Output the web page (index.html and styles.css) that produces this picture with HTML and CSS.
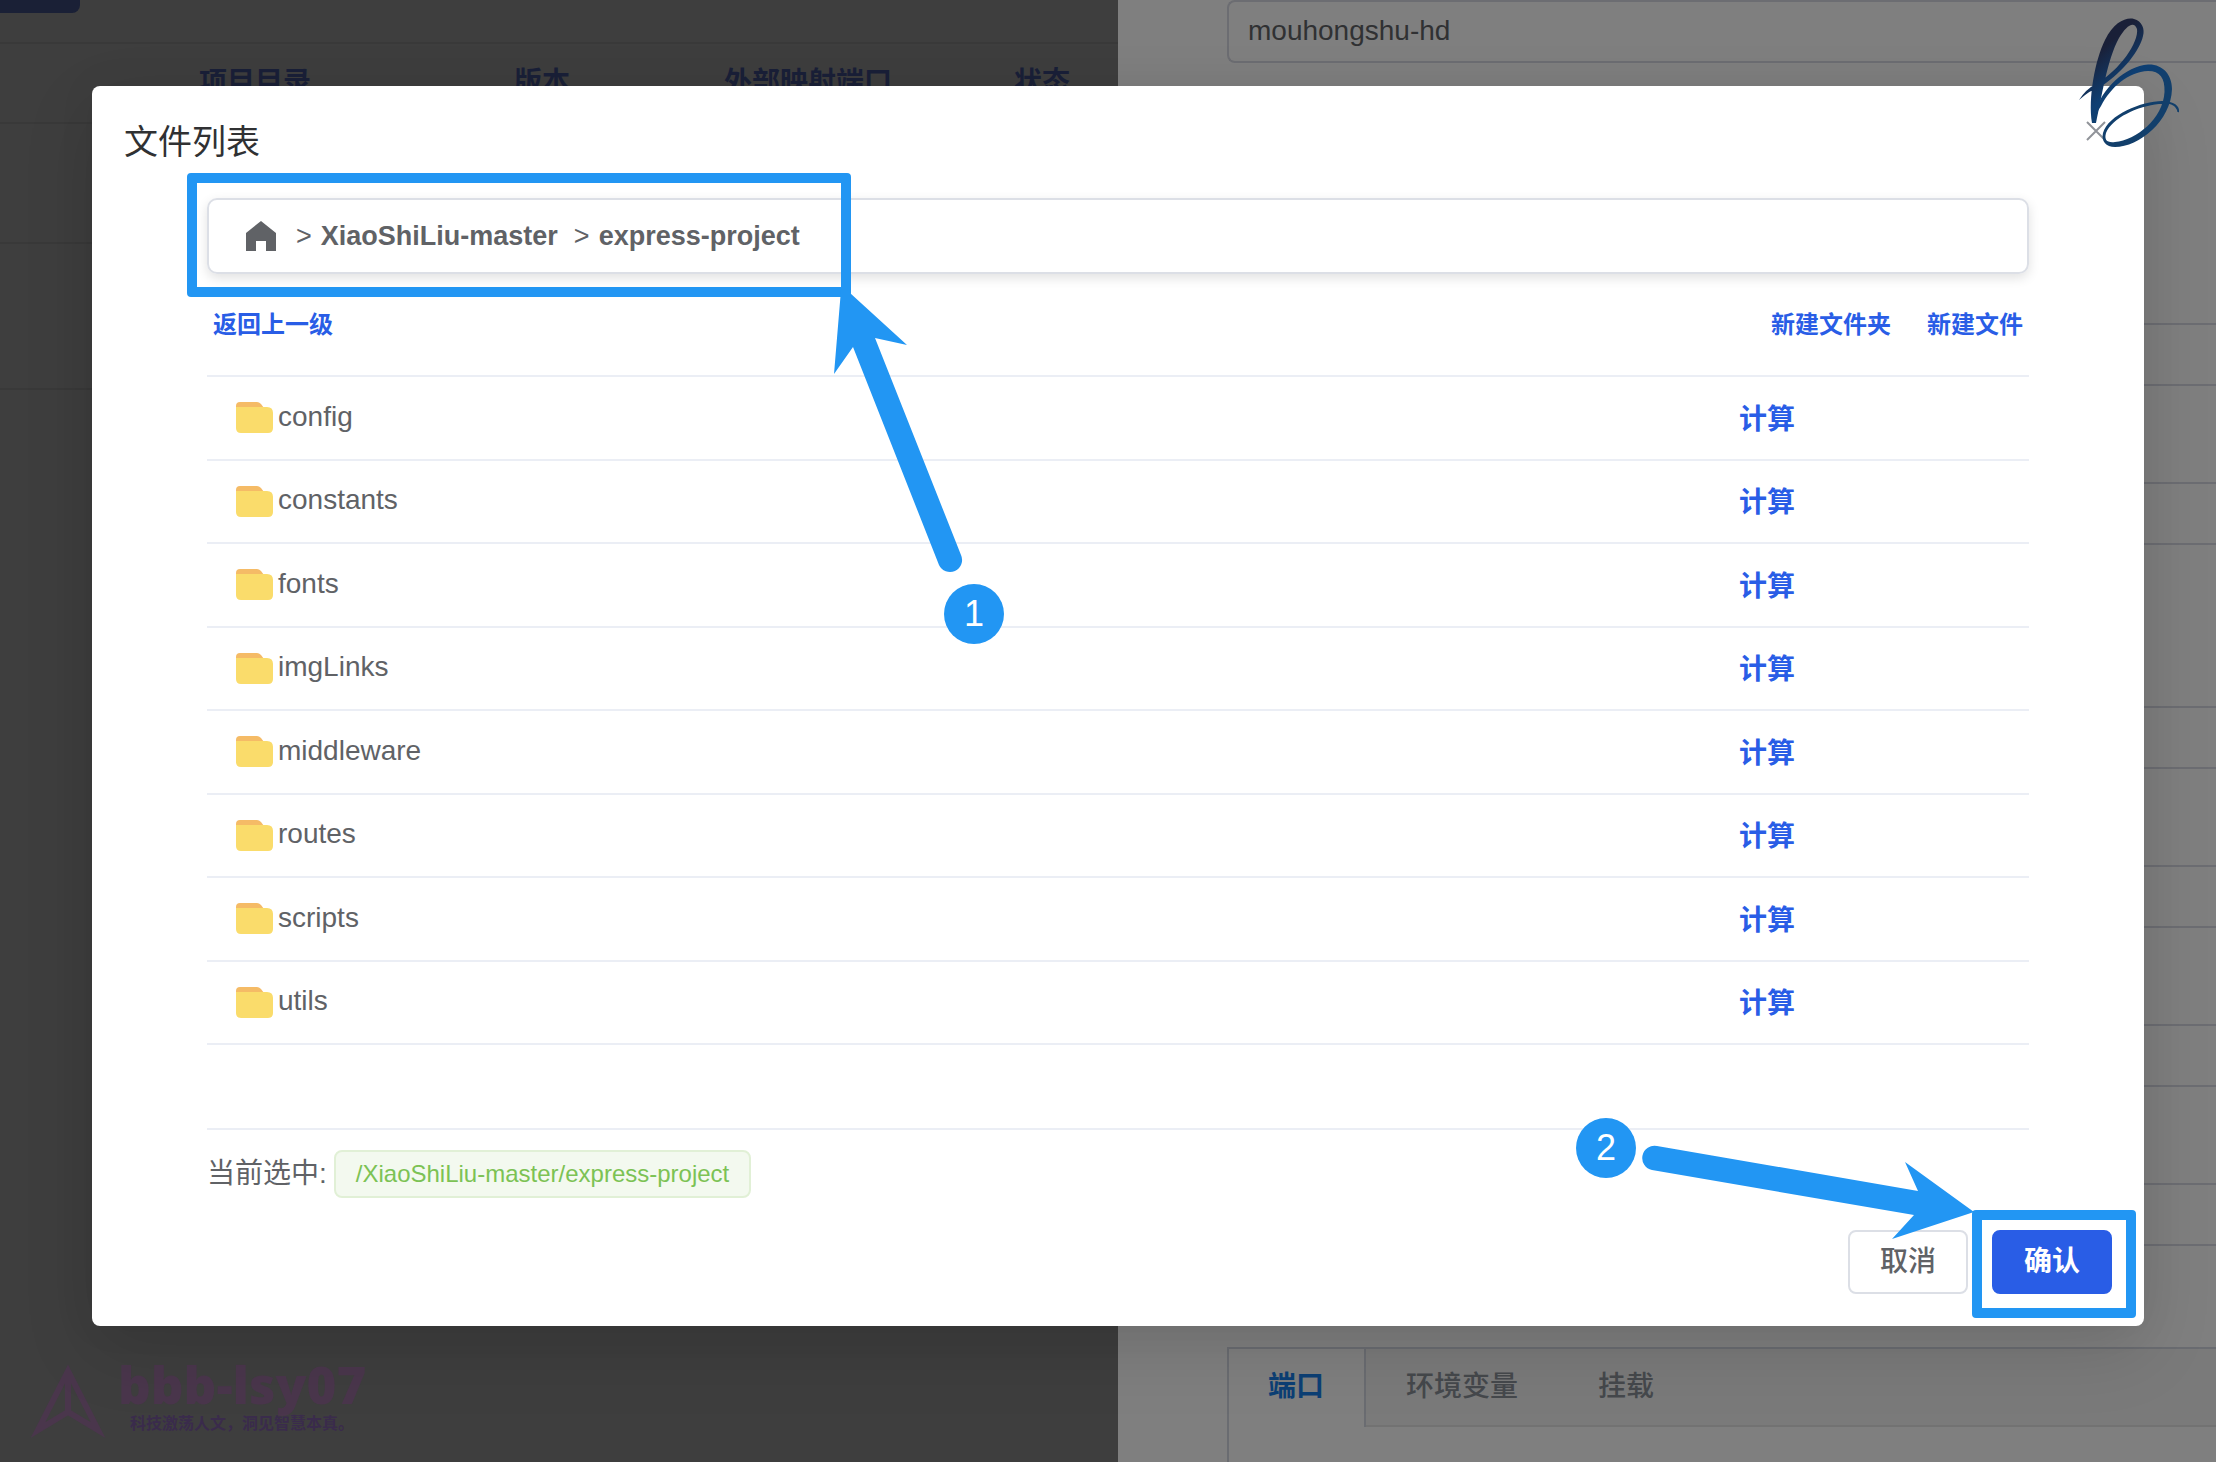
FILE: index.html
```html
<!DOCTYPE html>
<html lang="zh-CN">
<head>
<meta charset="utf-8">
<title>文件列表</title>
<link rel="stylesheet" href="styles.css">
</head>
<body>
<div class="page">
  <main class="projects">
    <div class="toolbar"><button class="toolbar-button" type="button" aria-label="新建"></button></div>
    <table class="project-table">
      <colgroup><col class="col-lead"><col class="col-dir"><col class="col-version"><col class="col-port"><col></colgroup>
      <thead><tr><th></th><th>项目目录</th><th>版本</th><th>外部映射端口</th><th>状态</th></tr></thead>
      <tbody><tr class="row-short"><td colspan="5"></td></tr><tr class="row-tall"><td colspan="5"></td></tr></tbody>
    </table>
    <div class="watermark">
      <svg class="watermark-icon" width="76" height="76" viewBox="0 0 76 76" aria-hidden="true">
        <path d="M38 9 L8 68 L38 50 L68 68 Z M38 9 V50" fill="none" stroke="currentColor" stroke-width="6"/>
      </svg>
      <div class="watermark-text">
        <div class="watermark-name">bbb-lsy07</div>
        <div class="watermark-motto">科技激荡人文，洞见智慧本真。</div>
      </div>
    </div>
  </main>
  <aside class="drawer">
    <form class="drawer-form">
      <div class="group"><input class="field" type="text" value="mouhongshu-hd" aria-label="容器名称"></div>
      <div class="group">
        <input class="field" type="text" aria-label="项目目录">
        <input class="field" type="text" aria-label="版本">
      </div>
      <div class="group">
        <input class="field" type="text" aria-label="启动命令">
        <input class="field" type="text" aria-label="镜像">
        <input class="field" type="text" aria-label="容器端口">
        <input class="field" type="text" aria-label="备注">
      </div>
      <div class="tabs">
        <div class="tab-bar">
          <button class="tab tab-active" type="button">端口</button>
          <button class="tab" type="button">环境变量</button>
          <button class="tab" type="button">挂载</button>
        </div>
      </div>
    </form>
  </aside>
</div>

<div class="overlay">
  <section class="dialog" role="dialog" aria-labelledby="dialog-title">
    <header class="dialog-header">
      <h1 class="dialog-title" id="dialog-title">文件列表</h1>
      <button class="close" type="button" aria-label="关闭">
        <svg width="20" height="20" viewBox="0 0 20 20"><path d="M1 1 19 19 M19 1 1 19" stroke="#909399" stroke-width="2"/></svg>
      </button>
    </header>
    <div class="dialog-body">
      <nav class="crumbs">
        <a class="crumb" href="#" aria-label="主页"><svg class="home" width="30" height="30" viewBox="0 0 30 30"><path d="M15 0 30 12 V30 H20 V20 H10 V30 H0 V12 Z" fill="currentColor"/></svg></a>
        <span class="crumb-sep">&gt;</span><a class="crumb crumb-parent" href="#">XiaoShiLiu-master</a>
        <span class="crumb-sep">&gt;</span><a class="crumb" href="#">express-project</a>
        <span class="mark mark-crumbs"></span>
      </nav>
      <div class="actions">
        <a class="link" href="#">返回上一级</a>
        <div class="actions-new"><a class="link" href="#">新建文件夹</a><a class="link" href="#">新建文件</a></div>
      </div>
      <svg class="defs" width="0" height="0" aria-hidden="true">
        <symbol id="folder" viewBox="0 0 37 31">
          <path d="M0 8 V4 Q0 0 4 0 H21 Q23 0 25 2 L28 6 V10 H0 Z" fill="#f5bb66"/>
          <path d="M0 5 H31 Q37 5 37 11 V26 Q37 31 32 31 H5 Q0 31 0 26 Z" fill="#fadc6b"/>
        </symbol>
      </svg>
      <div class="file-list">
        <table class="files">
          <colgroup><col><col class="col-size"></colgroup>
          <tbody>
            <tr><td class="name"><a class="file" href="#"><svg class="folder" width="37" height="31"><use href="#folder"/></svg><span class="file-name">config</span></a></td><td class="calc"><a class="size" href="#">计算</a></td></tr>
            <tr><td class="name"><a class="file" href="#"><svg class="folder" width="37" height="31"><use href="#folder"/></svg><span class="file-name">constants</span></a></td><td class="calc"><a class="size" href="#">计算</a></td></tr>
            <tr><td class="name"><a class="file" href="#"><svg class="folder" width="37" height="31"><use href="#folder"/></svg><span class="file-name">fonts</span></a></td><td class="calc"><a class="size" href="#">计算</a></td></tr>
            <tr><td class="name"><a class="file" href="#"><svg class="folder" width="37" height="31"><use href="#folder"/></svg><span class="file-name">imgLinks</span></a></td><td class="calc"><a class="size" href="#">计算</a></td></tr>
            <tr><td class="name"><a class="file" href="#"><svg class="folder" width="37" height="31"><use href="#folder"/></svg><span class="file-name">middleware</span></a></td><td class="calc"><a class="size" href="#">计算</a></td></tr>
            <tr><td class="name"><a class="file" href="#"><svg class="folder" width="37" height="31"><use href="#folder"/></svg><span class="file-name">routes</span></a></td><td class="calc"><a class="size" href="#">计算</a></td></tr>
            <tr><td class="name"><a class="file" href="#"><svg class="folder" width="37" height="31"><use href="#folder"/></svg><span class="file-name">scripts</span></a></td><td class="calc"><a class="size" href="#">计算</a></td></tr>
            <tr><td class="name"><a class="file" href="#"><svg class="folder" width="37" height="31"><use href="#folder"/></svg><span class="file-name">utils</span></a></td><td class="calc"><a class="size" href="#">计算</a></td></tr>
          </tbody>
        </table>
      </div>
      <div class="selected"><span>当前选中:</span><span class="tag">/XiaoShiLiu-master/express-project</span></div>
    </div>
    <footer class="dialog-footer">
      <button class="button" type="button">取消</button>
      <div class="confirm"><button class="button button-primary" type="button">确认</button><span class="mark mark-confirm"></span></div>
    </footer>

    <svg class="arrow arrow-one" width="80" height="286" viewBox="830 288 80 286" aria-hidden="true">
      <path d="M842 288 H847 L850 293 L907 345 L875 338 L961 555 A12 12 0 0 1 939 565 L853 347 L834 374 L841 290 Z" fill="#2296f3"/>
    </svg>
    <span class="step step-one">1</span>
    <span class="step step-two">2</span>
    <svg class="arrow arrow-two" width="336" height="84" viewBox="1640 1158 336 84" aria-hidden="true">
      <path d="M1657 1146 L1918 1191 L1905 1162 L1974 1212 L1892 1239 L1914 1215 L1652 1170 A12 12 0 0 1 1657 1146 Z" fill="#2296f3"/>
    </svg>
  </section>
</div>

<svg class="logo" width="116" height="140" viewBox="2070 12 116 140" aria-hidden="true">
  <defs><linearGradient id="ink" gradientUnits="userSpaceOnUse" x1="2100" y1="40" x2="2150" y2="100"><stop offset="0.1" stop-color="#1a2038"/><stop offset="0.6" stop-color="#0e3f73"/><stop offset="1" stop-color="#123f6b"/></linearGradient></defs>
  <g fill="url(#ink)">
    <path d="M2079 100 Q2086 89 2096 84 C2120 70 2139 42 2137 29 C2134 20 2126 26 2119 38 C2107 60 2102 96 2096 123 L2092 123 C2088 98 2095 60 2105 40 C2114 22 2126 17 2134 19 C2142 21 2145 29 2143 36 C2140 50 2124 71 2102 86 Q2090 90 2079 100 Z"/>
    <path d="M2094 114 C2102 88 2126 66 2148 64.500 C2163 64 2172 75 2172 89 C2171 121 2139 147 2115 147 C2106 147 2101 141 2103 133 C2108 115 2142 101 2162 101 C2174 101 2180 106 2179 112 Q2177 113 2177 110 C2174 104 2170 103 2159 104 C2138 106 2112 118 2106 133 C2104 140 2107 143 2115 142 C2136 140 2163 119 2164.500 92 C2165 78 2160 71 2148 71 C2128 72 2111 87 2101 106 L2096 114 Z"/>
  </g>
</svg>
</body>
</html>
```
FILE: styles.css
```css
* { box-sizing: border-box; }

body {
  margin: 0;
  overflow: hidden;
  font-family: "Liberation Sans", "Noto Sans CJK SC", sans-serif;
  font-size: 28px;
  line-height: 40px;
  color: #606266;
  background: #3d3d3d;
}

a { color: inherit; text-decoration: none; }
button, input { font: inherit; }

/* Dimmed page behind the dialog */
.page {
  display: grid;
  grid-template-columns: 1118fr 1098fr;
  height: 100vh;
  overflow: hidden;
}

.projects {
  display: flex;
  flex-direction: column;
  background: #3e3e3e;
}

.toolbar { height: 42px; }

.toolbar-button {
  display: block;
  width: 80px;
  height: 13px;
  padding: 0;
  border: 0;
  border-radius: 0 0 8px 0;
  background: #1a2036;
}

.project-table {
  width: 100%;
  table-layout: fixed;
  border-collapse: collapse;
}
.project-table th,
.project-table td {
  padding: 0;
  border-top: 2px solid #393939;
  text-align: left;
}
.project-table th { height: 80px; color: #1a2038; font-weight: 600; }
.row-short { height: 120px; }
.row-tall { height: 146px; border-bottom: 2px solid #393939; }
.col-lead { width: 199px; }
.col-dir { width: 315px; }
.col-version { width: 210px; }
.col-port { width: 290px; }

.watermark {
  display: flex;
  gap: 12px;
  margin-top: auto;
  padding: 0 30px 24px;
  color: #4a364c;
}
.watermark-icon { margin-top: 6px; }
.watermark-name {
  font-family: "Open Sans", sans-serif;
  font-size: 51px;
  font-weight: 800;
  line-height: 56px;
}
.watermark-motto {
  padding: 0 12px;
  color: #3a2b4c;
  font-size: 16px;
  line-height: 24px;
  font-weight: 700;
}

.drawer {
  padding-left: 109px;
  overflow: hidden;
  background: #7f7f7f;
}
.drawer-form {
  display: flex;
  flex-direction: column;
}
.group {
  display: flex;
  flex-direction: column;
  gap: 96px;
  margin-bottom: 161px;
}
.group:first-child { margin-bottom: 260px; }
.group:nth-child(3) { margin-bottom: 101px; }
.field {
  width: 100%;
  height: 63px;
  padding: 0 20px 2px 19px;
  border: 2px solid #6c6d72;
  border-right: 0;
  border-radius: 8px 0 0 8px;
  background: transparent;
  color: #303133;
}
.tabs {
  height: 140px;
  border: 2px solid #6a6c71;
  border-right: 0;
}
.tab-bar {
  display: flex;
  height: 78px;
  background: #7a7a7a;
  border-bottom: 2px solid #727272;
}
.tab {
  height: 78px;
  padding: 0 40px 2px;
  border: 0;
  background: transparent;
  color: #45484c;
  font-weight: 500;
}
.tab-active {
  padding-left: 39px;
  border-right: 2px solid #6a6c71;
  background: #7f7f7f;
  color: #0c3f75;
  font-weight: 600;
}

/* Dialog */
.overlay {
  position: absolute;
  inset: 0;
  padding: 86px 72px 0 92px;
}
.dialog {
  position: relative;
  border-radius: 8px;
  background: #fff;
  box-shadow: 0 24px 72px rgba(0, 0, 0, 0.12), 0 0 40px rgba(0, 0, 0, 0.05);
}
.dialog-header {
  display: flex;
  justify-content: space-between;
  padding: 35px 38px 35px 32px;
}
.dialog-title {
  margin: 0;
  color: #303133;
  font-size: 34px;
  line-height: 42px;
  font-weight: 400;
}
.close {
  display: flex;
  align-self: flex-start;
  padding: 0;
  border: 0;
  background: none;
}
.dialog-body { padding: 0 115px; }

.crumbs {
  position: relative;
  display: flex;
  align-items: center;
  height: 76px;
  padding: 0 37px;
  border: 2px solid #dcdfe6;
  border-radius: 10px;
  box-shadow: 0 4px 12px rgba(0, 0, 0, 0.12);
  font-size: 27px;
}
.crumb { font-weight: 700; }
.crumb-parent { margin-right: 16px; }
.home { display: block; margin-right: 20px; }
.crumb-sep { margin-right: 9px; }

.mark {
  position: absolute;
  border: 10px solid #2296f3;
  border-radius: 4px;
  pointer-events: none;
}
.mark-crumbs { top: -27px; left: -22px; width: 664px; height: 124px; }
.mark-confirm { top: -20px; right: -24px; bottom: -24px; left: -20px; }

.actions {
  display: flex;
  align-items: center;
  justify-content: space-between;
  height: 101px;
  padding: 0 6px;
}
.actions-new { display: flex; gap: 36px; }
.link {
  color: #295de6;
  font-size: 24px;
  font-weight: 600;
}
.defs { display: block; }

.file-list {
  min-height: 755px;
  border-bottom: 2px solid #ebeef5;
}
.files {
  width: 100%;
  height: 670px;
  table-layout: fixed;
  border-collapse: separate;
  border-spacing: 0;
  border-top: 2px solid #ebeef5;
}
.files td { padding: 0; border-bottom: 2px solid #ebeef5; }
.files .name { padding-left: 29px; }
.files .calc { padding-top: 4px; }
.col-size { width: 290px; }
.file { display: flex; align-items: center; gap: 5px; }
.file-name { padding-bottom: 2px; }
.size { color: #295de6; font-weight: 600; }

.selected {
  display: flex;
  align-items: center;
  gap: 7px;
  padding-top: 20px;
}
.tag {
  padding: 0 20px;
  border: 2px solid #e1f0d6;
  border-radius: 8px;
  background: #f3f9ef;
  color: #7cc254;
  font-size: 24px;
  line-height: 44px;
}

.dialog-footer {
  display: flex;
  justify-content: flex-end;
  gap: 24px;
  padding: 32px 32px;
}
.confirm { position: relative; }
.button {
  display: block;
  width: 120px;
  height: 64px;
  padding: 0;
  border: 2px solid #dcdfe6;
  border-radius: 8px;
  background: #fff;
  color: #606266;
  font-weight: 500;
}
.button-primary {
  border-color: #295de6;
  background: #295de6;
  color: #fff;
  font-weight: 600;
}

/* Numbered callouts drawn over the dialog */
.step {
  position: absolute;
  width: 60px;
  height: 60px;
  border-radius: 50%;
  background: #2296f3;
  color: #fff;
  font-size: 36px;
  line-height: 60px;
  text-align: center;
}
.step-one { top: 498px; left: 852px; }
.step-two { top: 1032px; right: 508px; }
.arrow { position: absolute; overflow: visible; pointer-events: none; }
.arrow-one { top: 202px; left: 738px; }
.arrow-two { top: 1072px; right: 168px; }

.logo {
  position: absolute;
  top: 12px;
  right: 30px;
  pointer-events: none;
}
```
